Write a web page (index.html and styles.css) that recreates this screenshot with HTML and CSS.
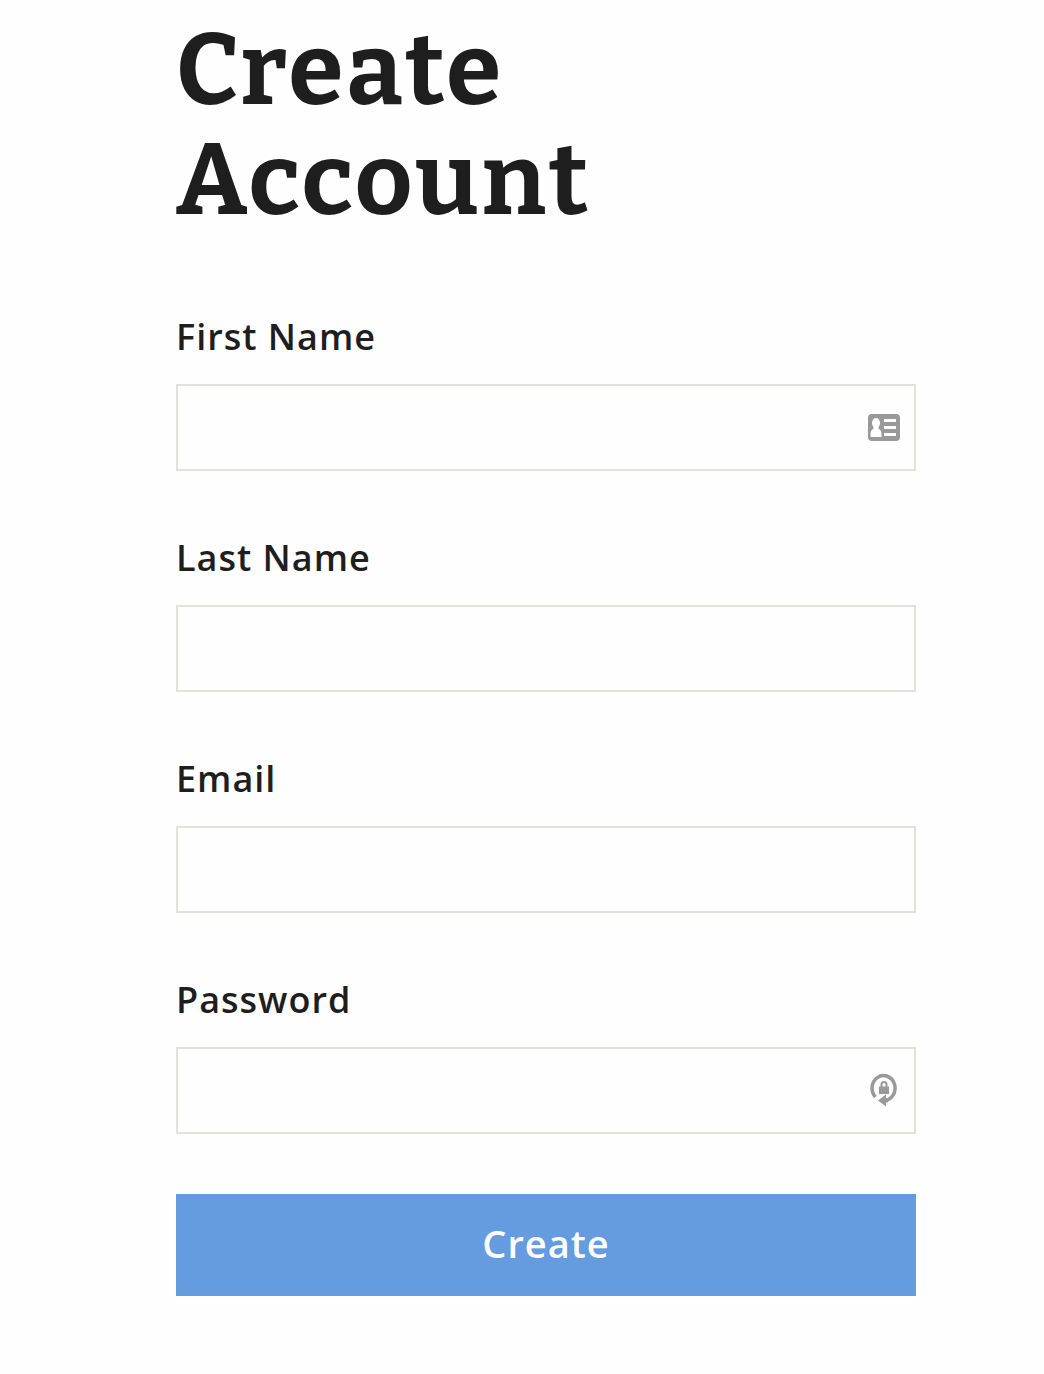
FILE: index.html
```html
<!DOCTYPE html>
<html lang="en">
<head>
    <meta charset="UTF-8">
    <meta name="viewport" content="width=device-width, initial-scale=1.0">
    <title>Create Account</title>
    <link rel="stylesheet" href="styles.css">
</head>
<body>
    <main class="container">
        <h1>Create<br>Account</h1>
        <form id="accountForm">
            <div class="field">
                <label for="first_name">First Name</label>
                <div class="control">
                    <input type="text" id="first_name" name="first_name">
                    <svg class="icon" viewBox="0 0 36 36" aria-hidden="true">
                        <rect x="2" y="5" width="32" height="27" rx="4" fill="#999"/>
                        <ellipse cx="10" cy="14" rx="4" ry="5" fill="#fff"/>
                        <path d="M4.500 28v-3q0-4 3-5.500v-2h5v2q3 1.500 3 5.500v3z" fill="#fff"/>
                        <path d="M18 11.500h12M18 18.500h12M18 25.500h12" stroke="#fff" stroke-width="3"/>
                    </svg>
                </div>
            </div>
            <div class="field">
                <label for="last_name">Last Name</label>
                <div class="control">
                    <input type="text" id="last_name" name="last_name">
                </div>
            </div>
            <div class="field">
                <label for="email">Email</label>
                <div class="control">
                    <input type="email" id="email" name="email">
                </div>
            </div>
            <div class="field">
                <label for="password">Password</label>
                <div class="control">
                    <input type="password" id="password" name="password">
                    <svg class="icon" viewBox="0 0 36 36" aria-hidden="true">
                        <path d="M9.500 25A11.500 12.500 0 1 1 19 28.500" fill="none" stroke="#999" stroke-width="3.500"/>
                        <path d="M12 28.500l8-6v4h2v4h-2v4z" fill="#999"/>
                        <path d="M13 14.500h10v7.500h-10z" fill="#999"/>
                        <path d="M15.500 15.500v-3a2.500 2.500 0 0 1 5 0v3" fill="none" stroke="#999" stroke-width="2"/>
                    </svg>
                </div>
            </div>
            <button type="submit">Create</button>
        </form>
    </main>
</body>
</html>
```
FILE: styles.css
```css
* {
    box-sizing: border-box;
}
body {
    font-family: "Open Sans", sans-serif;
    background-color: #fefefe;
    color: #1e1e1e;
    margin: 0;
}
.container {
    padding: 16px 128px 78px 176px;
}
h1 {
    margin: 0 0 74px;
    font-family: "Bitter", "DejaVu Serif", serif;
    font-size: 100px;
    font-weight: 700;
    line-height: 110px;
    letter-spacing: 3px;
}
.field {
    margin-bottom: 60px;
}
label {
    display: block;
    margin-bottom: 20px;
    font-size: 36px;
    font-weight: 600;
    line-height: 54px;
    letter-spacing: 1px;
}
.control {
    position: relative;
}
input {
    display: block;
    width: 100%;
    height: 87px;
    padding: 0 60px 0 20px;
    border: 2px solid #e2e2da;
    border-radius: 0;
    background-color: #fefefe;
    font: inherit;
    font-size: 36px;
}
.icon {
    position: absolute;
    top: 25px;
    right: 14px;
    width: 36px;
    height: 36px;
}
button {
    display: block;
    width: 100%;
    height: 102px;
    padding: 0 0 4px;
    border: none;
    background-color: #659bdf;
    color: #fff;
    font: inherit;
    font-size: 38px;
    font-weight: 600;
    letter-spacing: 1px;
    cursor: pointer;
}
@media (max-width: 700px) {
    .container {
        padding: 16px 20px 40px;
    }
}
```
